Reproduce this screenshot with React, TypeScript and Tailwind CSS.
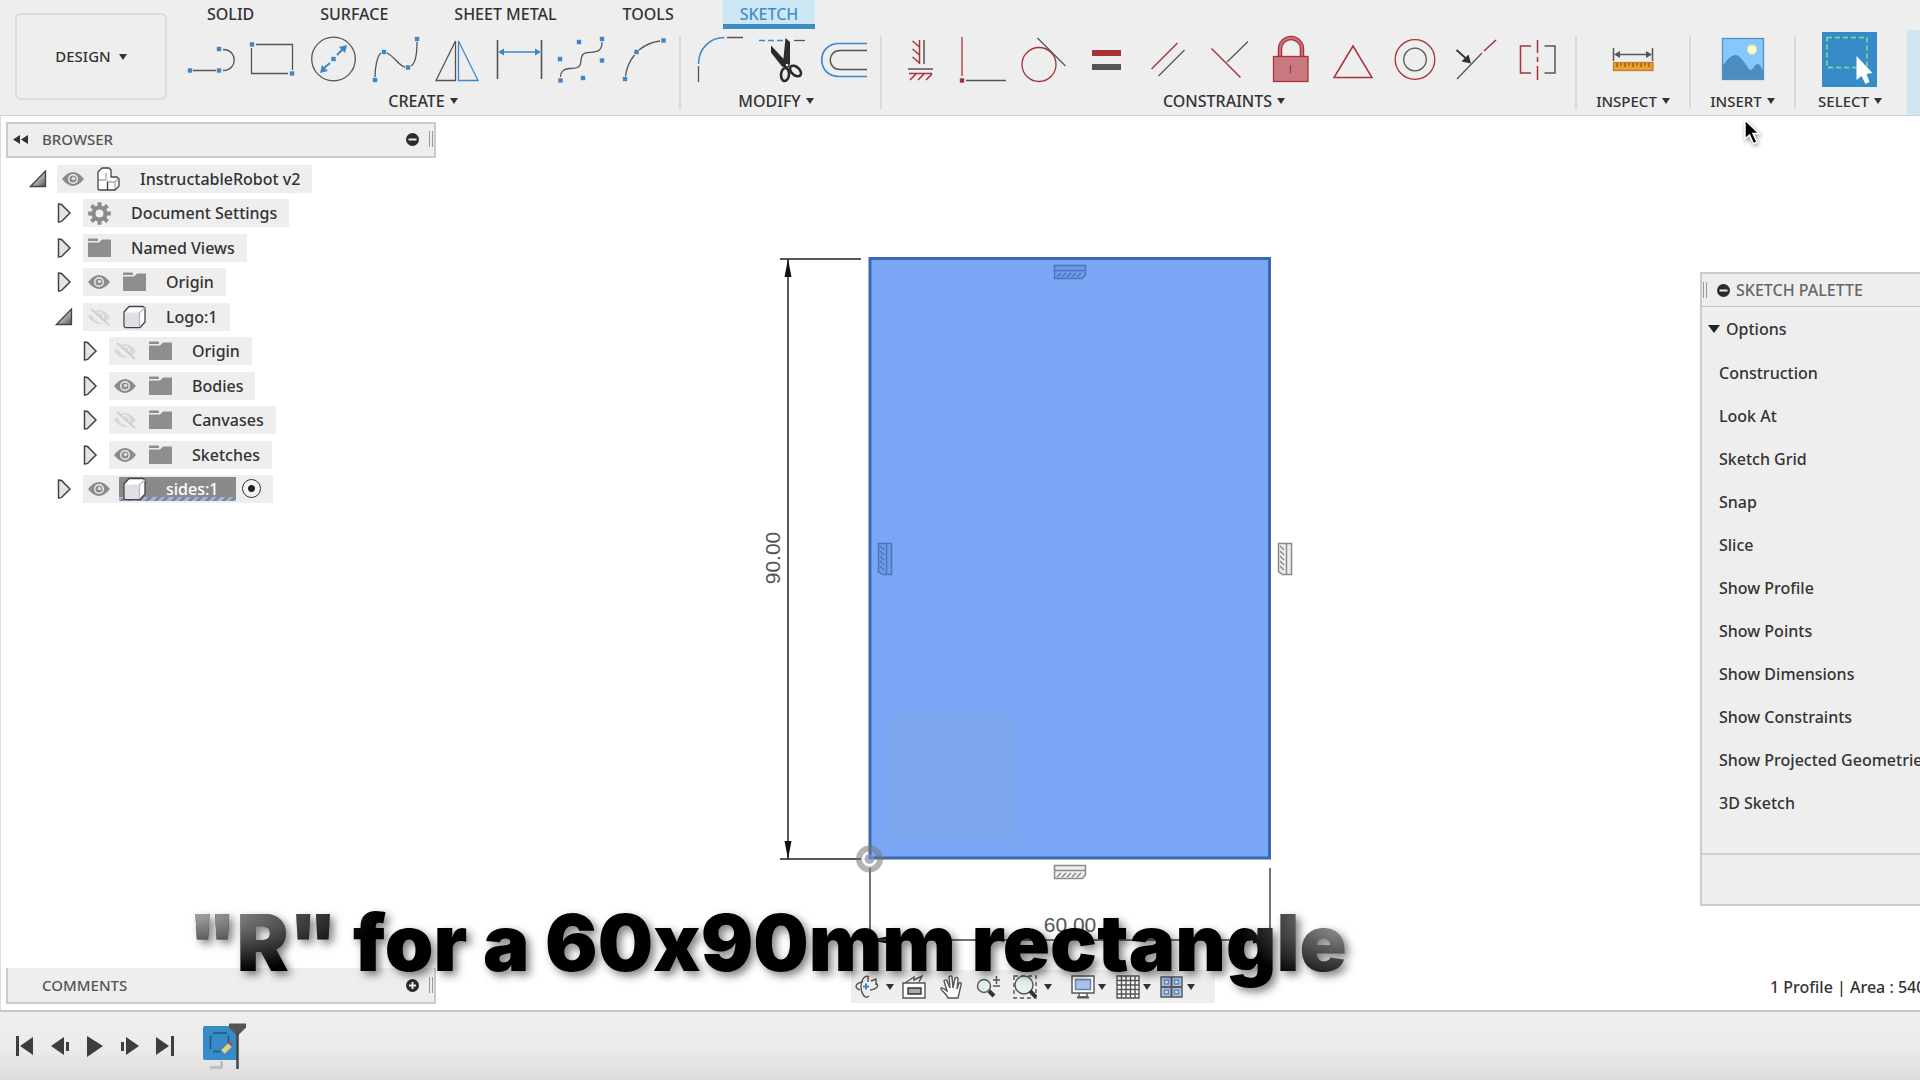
import type { ReactNode } from "react";

const BLUE = "#3f86c8";
const RED = "#a8323a";
const INK = "#555";

const Caret = () => (
    <svg className="h-2 w-2 shrink-0" viewBox="0 0 8 8" fill="#333">
        <path d="M0 1h8L4 7z" />
    </svg>
);

const Dot = ({ x, y, color = BLUE }: { x: number; y: number; color?: string }) => (
    <rect x={x - 2.2} y={y - 2.2} width="4.4" height="4.4" fill={color} stroke="none" />
);

// toolbar icons share one coordinate space, every tool shows its own slice of it
const Tool = ({ x, label, w = 62, children }: { x: number; label: string; w?: number; children: ReactNode }) => (
    <button type="button" aria-label={label} className="shrink-0">
        <svg className="block h-[57px]" width={w} viewBox={`${x} 31 ${w} 57`} fill="none" stroke={INK} strokeWidth="1.3">
            {children}
        </svg>
    </button>
);

const Group = ({ label, shift, className = "", children }: { label: string; shift?: boolean; className?: string; children: ReactNode }) => (
    <div className={`flex shrink-0 flex-col items-center ${className}`}>
        <div className="mt-[2px] flex">{children}</div>
        <button type="button" className={`flex items-center gap-[5px] leading-[26px] ${shift ? "mr-3" : "text-[15px]"}`}>
            {label} <Caret />
        </button>
    </div>
);

const Divider = () => <div className="mt-[7px] h-[73px] w-[2px] shrink-0 bg-[#d9d9d9]" />;

const CreateTools = () => (
    <>
        <Tool x={181} label="Line">
            <path d="M193 70.500h23M223 70.500c15 0 15-21 0-21" />
            <Dot x={190} y={70.500} /><Dot x={219} y={70.500} /><Dot x={219} y={49} />
        </Tool>
        <Tool x={243} label="Rectangle">
            <path d="M256 44.500h36.500V70M288 73.500h-36.500V48" />
            <Dot x={252} y={44.500} /><Dot x={292} y={73.500} />
        </Tool>
        <Tool x={305} label="Circle">
            <circle cx="333.5" cy="59" r="21.800" />
            <path d="M337 55l6-6M330 63l-6 5" stroke={BLUE} strokeWidth="2" />
            <path d="M347 45l-2 8-6-6zM320 73l2-8 6 6z" fill={BLUE} stroke="none" />
            <Dot x={333.500} y={59} />
        </Tool>
        <Tool x={367} label="Spline">
            <path d="M375 77c0-9 2-21 6-24M387 53c8 4 12 13 18 14M411 66c5-3 6-14 6-24" />
            <Dot x={375} y={80} /><Dot x={384} y={52} /><Dot x={408} y={67.500} /><Dot x={417} y={39} />
        </Tool>
        <Tool x={429} label="Mirror">
            <path d="M455.500 41v39.500H436z" />
            <path d="M458.500 41v39.500H478z" stroke={BLUE} />
        </Tool>
        <Tool x={491} label="Sketch Dimension">
            <path d="M497.500 40v39M541.500 40v39" strokeWidth="1.600" />
            <path d="M501 52h37" stroke={BLUE} />
            <path d="M498 52l6-3.500v7zM541 52l-6-3.500v7z" fill={BLUE} stroke="none" />
        </Tool>
        <Tool x={553} label="Control Point Spline">
            <path d="M560.500 77c0-6 3-8 9-8.500 9-.5 11-1 11.500-8 .5-6 2-8 9-8.200 8-.3 12-2 12-10" />
            <Dot x={560} y={59} /><Dot x={560.500} y={80.500} /><Dot x={579} y={42} /><Dot x={583} y={78} /><Dot x={602} y={39} /><Dot x={602} y={60.500} />
        </Tool>
        <Tool x={615} label="Arc">
            <path d="M625.500 76c1-8 4-15 9-21M639 50c6-5 13-8 21-9" />
            <Dot x={625} y={79} /><Dot x={636.500} y={52} /><Dot x={663.500} y={40.500} />
        </Tool>
    </>
);

const ModifyTools = () => (
    <>
        <Tool x={689} label="Fillet">
            <path d="M698.500 66v16M727 37.500h16" />
            <path d="M698.500 64c0-15 11-26.500 26-26.500" stroke={BLUE} strokeWidth="1.500" />
        </Tool>
        <Tool x={751} label="Trim">
            <path d="M759 40.500h24" stroke={BLUE} strokeDasharray="6 3" />
            <path d="M794 40.500h11" />
            <path d="M785.500 38l4.500 4v22l-3 2-4-3zM771 45.500l15 16-1 6-3-1-11-14z" fill="#2b2b2b" stroke="none" />
            <ellipse cx="785" cy="74.500" rx="4" ry="6.500" stroke="#2b2b2b" strokeWidth="2.600" transform="rotate(5 785 74.500)" />
            <ellipse cx="795.500" cy="71" rx="4" ry="6.500" stroke="#2b2b2b" strokeWidth="2.600" transform="rotate(-48 795.500 71)" />
            <circle cx="787" cy="65" r="2" fill="#eee" stroke="#2b2b2b" />
        </Tool>
        <Tool x={813} label="Offset">
            <path d="M867 43.500h-28c-23 0-23 33 0 33h28" stroke={BLUE} strokeWidth="1.700" />
            <path d="M867 50.500h-27c-13 0-13 19 0 19h27" strokeWidth="1.500" />
        </Tool>
    </>
);

const ConstraintTools = () => (
    <>
        <Tool x={889} label="Horizontal/Vertical">
            <path d="M924 40v24M908 69h25" strokeWidth="1.500" />
            <path d="M919.500 40v24M909 73.500h23M912.500 41l7 6M912.500 49l7 6M912.500 57l7 6M910 80l6-6M918 80l6-6M926 80l6-6" stroke={RED} strokeWidth="1.500" />
        </Tool>
        <Tool x={951} label="Coincident">
            <path d="M962 37v39" stroke={RED} />
            <path d="M966 80.500h40" />
            <Dot x={962} y={80.500} color={RED} />
        </Tool>
        <Tool x={1013} label="Tangent">
            <circle cx="1039" cy="64.500" r="17" stroke={RED} />
            <path d="M1037.500 38l28 28" />
        </Tool>
        <Tool x={1075} label="Equal">
            <path d="M1092 64h29v6h-29z" fill={INK} stroke="none" />
            <path d="M1092 50h29v6h-29z" fill={RED} stroke="none" />
        </Tool>
        <Tool x={1137} label="Parallel">
            <path d="M1151.500 69l26-26" stroke={RED} strokeWidth="1.500" />
            <path d="M1158.500 76l26-26" />
        </Tool>
        <Tool x={1199} label="Perpendicular">
            <path d="M1227 62l21-20.500" />
            <path d="M1211.500 48.500l29 29" stroke={RED} strokeWidth="1.500" />
        </Tool>
        <Tool x={1261} label="Fix/UnFix">
            <path d="M1280 56V49a10.500 10.500 0 0 1 22 0v7" stroke={RED} strokeWidth="4.500" />
            <path d="M1280 56V49a10.500 10.500 0 0 1 22 0v7" stroke="#c8797f" strokeWidth="1.800" />
            <rect x="1273.500" y="56.500" width="34.500" height="25" fill="#c8797f" stroke={RED} />
            <path d="M1290.500 65v8" stroke={RED} />
        </Tool>
        <Tool x={1323} label="Polygon">
            <path d="M1353 46l-19 31.500h38z" stroke={RED} strokeWidth="1.500" />
        </Tool>
        <Tool x={1385} label="Concentric">
            <circle cx="1415" cy="59.500" r="19.800" stroke={RED} />
            <circle cx="1415" cy="59.500" r="11.300" />
        </Tool>
        <Tool x={1447} label="Midpoint">
            <path d="M1457 79l25-26" />
            <path d="M1484 51l12-11" stroke={RED} strokeWidth="1.600" />
            <path d="M1456.500 50l9 8" stroke="#333" strokeWidth="1.800" />
            <path d="M1471 63.500l-9.500-2 7-7z" fill="#333" stroke="none" />
        </Tool>
        <Tool x={1509} label="Symmetry">
            <path d="M1531 46h-10.500v27H1531M1537.500 40v13M1537.500 57v5M1537.500 66v14" stroke={RED} strokeWidth="1.500" />
            <path d="M1544.500 46h10.500v27h-10.500" strokeWidth="1.500" />
        </Tool>
    </>
);

const tabs = ["SOLID", "SURFACE", "SHEET METAL", "TOOLS", "SKETCH"];

const Toolbar = () => (
    <header className="flex h-[116px] shrink-0 overflow-hidden border-b border-[#d4d4d4] bg-[#eeeeee] font-medium">
        <div className="w-[181px] shrink-0 pt-[13px] pl-[15px]">
            <button type="button" className="flex h-[87px] w-[152px] items-center justify-center gap-2 rounded-md border-2 border-[#dcdcdc] text-[15px]">
                DESIGN <Caret />
            </button>
        </div>
        <div className="flex flex-1 flex-col">
            <nav className="flex h-[29px] shrink-0 gap-8 pl-[9px]">
                {tabs.map((tab) => (
                    <button key={tab} type="button" className={tab === "SKETCH" ? "border-b-[5px] border-[#3b8dc2] bg-[#cde7f5] px-[17px] pt-[3px] leading-5 text-[#4390c8]" : "border-b-[5px] border-transparent px-[17px] pt-[3px] leading-5"}>
                        {tab}
                    </button>
                ))}
            </nav>
            <div className="flex flex-1">
                <Group label="CREATE" shift className="mr-[2px]"><CreateTools /></Group>
                <Divider />
                <Group label="MODIFY" shift className="ml-2 pr-[5px]"><ModifyTools /></Group>
                <Divider />
                <Group label="CONSTRAINTS" shift className="ml-[7px] pr-1"><ConstraintTools /></Group>
                <Divider />
                <Group label="INSPECT" className="w-[112px]">
                    <Tool x={1602} label="Measure">
                        <path d="M1613.500 48v13M1652.500 48v13M1616 54.500h34" strokeWidth="1.500" />
                        <path d="M1614 54.500l6-3.500v7zM1652 54.500l-6-3.500v7z" fill={INK} stroke="none" />
                        <rect x="1613.500" y="62.500" width="39.500" height="8" fill="#eca02c" stroke="#b98335" />
                        <path d="M1617 63v4M1621 63v3M1625 63v4M1629 63v3M1633 63v4M1637 63v3M1641 63v4M1645 63v3M1649 63v4" stroke="#6b4a17" strokeWidth="1" />
                    </Tool>
                </Group>
                <Divider />
                <Group label="INSERT" className="w-[103px]">
                    <Tool x={1712} label="Insert Image">
                        <rect x="1722.500" y="38.500" width="41" height="41" fill="#86c8fb" stroke="none" />
                        <path d="M1722.500 66c5-7 9-11 13-11s8 6 12 12c1 2 2 3 3 3 3 0 4-6 7-6s4 4 6 7v8h-41z" fill="#4b8dc0" stroke="none" />
                        <circle cx="1752" cy="49.500" r="4.500" fill="#fdfbd3" stroke="#e8e6a0" />
                        <rect x="1722.500" y="38.500" width="41" height="41" stroke="#5790bd" />
                    </Tool>
                </Group>
                <Divider />
                <Group label="SELECT" className="mr-[3px] w-[108px]">
                    <Tool x={1819} label="Select">
                        <rect x="1822" y="32" width="55" height="55" fill="#378bc6" stroke="none" />
                        <rect x="1827" y="37.500" width="40" height="30" stroke="#7fe39a" strokeWidth="1.500" strokeDasharray="5 3" />
                        <path d="M1856.500 56v24l5-4 4 8 4-2-3-8 6-1z" fill="#fff" stroke="none" />
                    </Tool>
                </Group>
                <div className="mt-px flex-1 bg-[#d0e6f3]" />
            </div>
        </div>
    </header>
);

const Eye = ({ off }: { off?: boolean }) => (
    <svg className="h-[18px] w-[22px]" viewBox="0 0 22 18">
        <path d="M0 9Q11-5 22 9 11 23 0 9z" fill={off ? "#d8d8d8" : "#8b8b8b"} />
        <circle cx="11" cy="9" r="5" fill="#eee" />
        <circle cx="11" cy="9" r="3.600" fill={off ? "#d8d8d8" : "#8b8b8b"} />
        {off ? (
            <>
                <path d="M1 3l19 15" stroke="#eee" strokeWidth="4" />
                <path d="M3 1l18 16" stroke="#cfcfcf" strokeWidth="2" />
            </>
        ) : <circle cx="11.500" cy="8.500" r="1.800" fill="#ddd" />}
    </svg>
);

const Folder = () => (
    <svg className="h-[20px] w-[23px]" viewBox="0 0 23 20" fill="#8e8e8e">
        <path d="M0 1.500Q0 .5 1 .5h8q1 0 1 1V3H0zM0 4.500h11L14 1.500h9V19H0z" />
    </svg>
);

const Gear = () => (
    <svg className="h-[23px] w-[23px]" viewBox="-11.500 -11.500 23 23" fill="none" stroke="#8a8a8a">
        <circle r="6" strokeWidth="4" />
        {[0, 45, 90, 135].map((a) => (
            <path key={a} d="M0-11.300v4.500M0 11.300v-4.500" strokeWidth="4" transform={`rotate(${a})`} />
        ))}
    </svg>
);

const Component = () => (
    <svg className="h-[24px] w-[23px]" viewBox="0 0 23 24" fill="#fff" stroke="#444" strokeWidth="1.300" strokeLinejoin="round">
        <path d="M1 5l4-4h7l2 2v7h6l2 2v7l-4 4H2l-1-1z" />
        <path d="M2 13h7M9 6v7M10 15h8l3-3M10.500 13v10M18 15v7" stroke="#aaa" fill="none" />
        <path d="M10.500 15v8" stroke="#444" />
    </svg>
);

const Cube = () => (
    <svg className="h-[24px] w-[23px]" viewBox="0 0 23 24" fill="#fff" stroke="#444" strokeWidth="1.300" strokeLinejoin="round">
        <path d="M1 7l5-5.500h14l2 1.500v14l-5 5.500H2L1 21z" />
        <path d="M2 7.500h14.500V22H2z" fill="#dfe1e8" stroke="none" />
        <path d="M16.500 22V7.500L22 3" stroke="#bbb" fill="none" />
    </svg>
);

const Arrow = ({ open }: { open?: boolean }) => open ? (
    <svg className="-ml-[2px] h-[18px] w-[18px]" viewBox="0 0 18 18">
        <defs>
            <linearGradient id="arrow" x1="0" y1="0" x2="1" y2="1">
                <stop offset=".4" stopColor="#ccc" />
                <stop offset="1" stopColor="#555" />
            </linearGradient>
        </defs>
        <path d="M16.500 1v15.500H1.500z" fill="url(#arrow)" stroke="#444" strokeWidth="1.300" />
    </svg>
) : (
    <svg className="h-[20px] w-[15px]" viewBox="0 0 15 20">
        <path d="M1.500 1Q5 1 6 3l7 7-7 7q-1 2-4.500 2z" fill="#e4e4e8" stroke="#444" strokeWidth="1.500" />
    </svg>
);

type Row = { name: string; level: 0 | 1 | 2; icon: ReactNode; eye?: "on" | "off"; open?: boolean; active?: boolean };

const rows: Row[] = [
    { name: "InstructableRobot v2", level: 0, icon: <Component />, eye: "on", open: true },
    { name: "Document Settings", level: 1, icon: <Gear /> },
    { name: "Named Views", level: 1, icon: <Folder /> },
    { name: "Origin", level: 1, icon: <Folder />, eye: "on" },
    { name: "Logo:1", level: 1, icon: <Cube />, eye: "off", open: true },
    { name: "Origin", level: 2, icon: <Folder />, eye: "off" },
    { name: "Bodies", level: 2, icon: <Folder />, eye: "on" },
    { name: "Canvases", level: 2, icon: <Folder />, eye: "off" },
    { name: "Sketches", level: 2, icon: <Folder />, eye: "on" },
    { name: "sides:1", level: 1, icon: <Cube />, eye: "on", active: true },
];

const indent = ["pl-[25px]", "pl-[51px]", "pl-[77px]"];

const TreeRow = ({ row }: { row: Row }) => (
    <li className={`flex h-7 items-center ${indent[row.level]}`}>
        <button type="button" aria-label={`Toggle ${row.name}`} className="w-[26px] shrink-0"><Arrow open={row.open} /></button>
        <div className="flex h-7 items-center bg-[#eeeeee] pr-3 pl-[5px]">
            {row.eye && <button type="button" aria-label={`Visibility of ${row.name}`} className="mr-[9px]"><Eye off={row.eye === "off"} /></button>}
            {row.active ? (
                <>
                    <button type="button" className="relative flex h-6 items-center gap-5 bg-[#8a8a8a] pr-[18px] pl-1 text-white">
                        <span className="absolute inset-x-0 bottom-0 h-1 bg-[repeating-linear-gradient(135deg,#9db6d8_0_3px,#7f8894_3px_6px)]" />
                        <span className="relative">{row.icon}</span>
                        {row.name}
                    </button>
                    <input type="radio" name="active-component" defaultChecked aria-label="Active component" className="ml-[6px] h-[19px] w-[19px] appearance-none rounded-full border border-[#333] bg-[radial-gradient(circle,#222_0_3px,#f4f4f4_4px)]" />
                </>
            ) : (
                <button type="button" className={`flex items-center gap-5 ${row.eye ? "pl-1" : ""}`}>
                    {row.icon}
                    {row.name}
                </button>
            )}
        </div>
    </li>
);

const RoundSign = ({ plus }: { plus?: boolean }) => (
    <svg className="h-[13px] w-[13px]" viewBox="0 0 13 13">
        <circle cx="6.500" cy="6.500" r="6.500" fill="#2b2b2b" />
        <path d={plus ? "M3 6.500h7M6.500 3v7" : "M2.500 6.500h8"} stroke="#eee" strokeWidth="2" />
    </svg>
);

const Grip = () => <div className="h-4 w-1 border-x border-[#999]" />;

const LeftPanels = () => (
    <aside className="ml-[5px] flex w-[430px] shrink-0 flex-col justify-between pt-[6px] pb-[6px]">
        <div>
            <div className="flex h-9 items-center border-2 border-[#cbcbcb] bg-[#eeeeee] pb-[2px] text-[#555]">
                <button type="button" aria-label="Collapse browser" className="ml-[5px]">
                    <svg className="h-[9px] w-[15px]" viewBox="0 0 15 9" fill="#333"><path d="M7 0v9L0 4.500zM15 0v9L8 4.500z" /></svg>
                </button>
                <h2 className="ml-[14px] flex-1 text-[15px]">BROWSER</h2>
                <button type="button" aria-label="Minimize browser"><RoundSign /></button>
                <div className="mr-px ml-[10px]"><Grip /></div>
            </div>
            <ul className="mt-[7px] flex h-[338px] flex-col justify-between">
                {rows.map((row, i) => <TreeRow key={i} row={row} />)}
            </ul>
        </div>
        <div className="flex h-9 items-center border-2 border-t-0 border-[#cbcbcb] bg-[#eeeeee] text-[#555]">
            <h2 className="ml-[34px] flex-1 text-[15px]">COMMENTS</h2>
            <button type="button" aria-label="Expand comments"><RoundSign plus /></button>
            <div className="mr-px ml-[10px]"><Grip /></div>
        </div>
    </aside>
);

const Glyph = ({ transform, color, fill }: { transform: string; color: string; fill: string }) => (
    <g transform={transform} stroke={color} fill="none" strokeWidth="1.500">
        <path d="M.5 .5h31v9l-3 4H.5z" fill={fill} />
        <path d="M1 5.500h30M3 12l4-4M8 12l4-4M13 12l4-4M18 12l4-4M23 12l4-4" />
    </g>
);

const Drawing = () => (
    <svg className="h-[710px] w-[540px] shrink-0" viewBox="760 250 540 710">
        <rect x="870" y="259" width="400" height="599" fill="#79a7f6" />
        <rect x="887" y="716" width="126" height="125" fill="#7ca6ec" />
        <path d="M870 258.500h399.500v599.500H870z" fill="none" stroke="#3b68b0" strokeWidth="3" />
        <path d="M780 259h81M780 859h81M788 259v600" stroke="#222" strokeWidth="1.500" />
        <path d="M788 259l3.500 18h-7zM788 859l3.500-18h-7zM870 940l17-3.500v7zM1270 940l-17-3.500v7z" fill="#111" />
        <path d="M870 868v73M1270 868v73M870 940h400" stroke="#444" strokeWidth="1.500" />
        <circle cx="869.500" cy="859" r="10.500" fill="none" stroke="#777" strokeOpacity=".55" strokeWidth="6" />
        <circle cx="869.500" cy="859" r="5" fill="#8c8cb4" fillOpacity=".7" />
        <Glyph transform="translate(1054 265)" color="#4776bd" fill="#6f9ce8" />
        <Glyph transform="translate(1054 865)" color="#8a8a8a" fill="#eee" />
        <Glyph transform="translate(892 543) rotate(90)" color="#4776bd" fill="#6f9ce8" />
        <Glyph transform="translate(1292 543) rotate(90)" color="#8a8a8a" fill="#eee" />
        <g fontFamily="Liberation Sans, sans-serif" fontSize="21" fill="#555" textAnchor="middle">
            <text transform="translate(780 558) rotate(-90)">90.00</text>
            <text x="1070" y="932">60.00</text>
        </g>
    </svg>
);

const NavTool = ({ label, menu, className = "", children }: { label: string; menu?: boolean; className?: string; children: ReactNode }) => (
    <button type="button" aria-label={label} className={`flex items-center gap-[3px] ${className}`}>
        <svg className="h-6 w-6" viewBox="0 0 24 24" fill="none" stroke="#555" strokeWidth="1.400">{children}</svg>
        {menu && <Caret />}
    </button>
);

const NavBar = () => (
    <div className="ml-[6px] flex h-[33px] w-[364px] shrink-0 items-center bg-[#eeeeee] pl-1">
        <NavTool label="Orbit" menu className="mr-2 gap-[7px]">
            <path d="M14 2C9-1 6 6 6 12s4 13 8 9M15 15c8-1 9-5 6-7M8 7C0 8-1 13 5 15M13 1v6M16 6l5-2v6" />
            <path d="M8 11.500h6M11 8.500v6" stroke={BLUE} strokeWidth="2" />
        </NavTool>
        <NavTool label="Look At" className="mr-[13px]">
            <path d="M1 8h22v15H1z" fill="#fff" /><path d="M6 13h13v6H6z" fill="#aaa" stroke="#333" /><path d="M3 8l9-6v3l8-4-3 6" />
        </NavTool>
        <NavTool label="Pan" className="mr-[13px]">
            <path d="M9 23c-1-4-8-8-7-10 2-1 4 2 6 3L5 6c1-2 3-1 3 0l3 7-1-11c1-2 3-1 3 0l1 11 2-10c1-1 3-1 3 1l-1 10 2-6c1-1 3 0 2 2l-3 13z" fill="#fff" />
        </NavTool>
        <NavTool label="Zoom" className="mr-[13px]">
            <circle cx="8" cy="11" r="6.500" fill="#e3f1ed" /><path d="M13 16l5 5" stroke="#333" strokeWidth="4" /><path d="M17 5h7M20.500 1v8M17 11h7" />
        </NavTool>
        <NavTool label="Fit" menu className="mr-[19px] gap-[7px]">
            <path d="M1 1h22v22H1z" strokeDasharray="4 3" /><circle cx="11" cy="10" r="9" fill="#e3f1ed" /><path d="M17 16l6 6" stroke="#333" strokeWidth="4" />
        </NavTool>
        <NavTool label="Display Settings" menu className="mr-[10px]">
            <path d="M1 1h22v17H1zM8 18v4h8v-4" fill="#fff" /><path d="M4.500 4.500h15v10h-15z" fill="#a9c4ec" stroke="#6684b0" /><path d="M6 22.500h12" strokeWidth="2" />
        </NavTool>
        <NavTool label="Grid and Snaps" menu className="mr-[9px]">
            <path d="M1 1h22v22H1z" fill="#fff" /><path d="M5.500 1v22M10 1v22M14.500 1v22M19 1v22M1 5.500h22M1 10h22M1 14.500h22M1 19h22" />
        </NavTool>
        <NavTool label="Viewports" menu>
            <path d="M1 2h21v20H1z" fill="#a9c4ec" /><path d="M11.500 2v20M1 12h21" strokeWidth="2" /><path d="M4.500 5h4v4h-4zM14.500 5h4v4h-4zM4.500 15h4v4h-4zM14.500 15h4v4h-4z" stroke="#6684b0" fill="#d2e0f4" />
        </NavTool>
    </div>
);

const options = ["Construction", "Look At", "Sketch Grid", "Snap", "Slice", "Show Profile", "Show Points", "Show Dimensions", "Show Constraints", "Show Projected Geometries", "3D Sketch"];

const RightPanels = () => (
    <aside className="flex w-[220px] shrink-0 flex-col justify-between overflow-hidden pt-[156px] pb-[9px] whitespace-nowrap">
        <div className="border-y-2 border-l-2 border-[#cbcbcb] bg-[#eeeeee]">
            <div className="flex h-[33px] items-center border-b border-[#c4c4c4] pl-[1px] text-[#666]">
                <Grip />
                <button type="button" aria-label="Minimize palette" className="mr-[6px] ml-[10px]"><RoundSign /></button>
                <h2>SKETCH PALETTE</h2>
            </div>
            <button type="button" className="flex h-11 items-center gap-[6px] pl-[6px]">
                <svg className="h-2 w-3" viewBox="0 0 12 8" fill="#222"><path d="M0 0h12L6 8z" /></svg>
                Options
            </button>
            <ul className="pl-[17px]">
                {options.map((o) => <li key={o} className="flex h-[43px] items-center">{o}</li>)}
            </ul>
            <div className="mt-[29px] h-[51px] border-t-2 border-[#d0d0d0]" />
        </div>
        <p className="pl-[70px] leading-7">1 Profile | Area : 5400.00 mm^2</p>
    </aside>
);

const playback = [
    { label: "Go to start", d: "M0 0h3v20H0zM17 1v18L4 10z" },
    { label: "Step back", d: "M13 1v18L0 10zM15 6h3v9h-3z" },
    { label: "Play", d: "M1 0l16 10L1 21z" },
    { label: "Step forward", d: "M0 6h3v9H0zM5 1l13 9L5 19z" },
    { label: "Go to end", d: "M0 1l13 9L0 19zM15 0h3v20h-3z" },
];

const Timeline = () => (
    <footer className="flex h-[70px] shrink-0 items-center border-t-2 border-[#c6c6c6] bg-linear-to-b from-[#efefef] via-[#ebebeb] to-[#dddddd] pl-4">
        <div className="flex gap-[17px]">
            {playback.map((p) => (
                <button key={p.label} type="button" aria-label={p.label}>
                    <svg className="h-[21px] w-[18px]" viewBox="0 0 18 21" fill="#3d3d3d"><path d={p.d} /></svg>
                </button>
            ))}
        </div>
        <button type="button" aria-label="Sketch feature" className="ml-[29px]">
            <svg className="h-[46px] w-[44px]" viewBox="204 1024 44 46" fill="none">
                <path d="M222.500 1062v6.500H211" stroke="#bbb" strokeWidth="2.500" />
                <rect x="204" y="1027" width="35" height="34" rx="2" fill="#378bc6" />
                <path d="M214 1034h14M211.500 1037v13M229.500 1037v9M214 1052.500h8" stroke="#2b5576" strokeWidth="1.600" />
                <path d="M224 1053l7-7" stroke="#e3cf7d" strokeWidth="5" />
                <path d="M229 1044l3-2 2 3-2 2z" fill="#b14a55" />
                <path d="M230 1024.500h17v4l-8 8h-1l-8-8z" fill="#555" />
                <path d="M238.500 1034v36" stroke="#444" strokeWidth="2.500" />
            </svg>
        </button>
    </footer>
);

const App = () => {
    return (
        <div className="relative flex h-screen w-full flex-col overflow-hidden bg-white font-['Noto_Sans',sans-serif] text-base font-medium text-[#333]">
            <Toolbar />
            <main className="relative flex min-h-0 flex-1 border-l border-[#dddddd]">
                <LeftPanels />
                <section className="flex flex-1 flex-col items-center justify-end gap-[10px] pr-[76px] pb-[7px]">
                    <Drawing />
                    <NavBar />
                </section>
                <RightPanels />
                <p className="absolute bottom-[17px] left-[187px] bg-black bg-[radial-gradient(ellipse_190px_60px_at_0%_20%,#aaa,transparent),radial-gradient(ellipse_110px_70px_at_100%_25%,#aaa,transparent)] bg-clip-text font-['Inter',sans-serif] text-[78px] leading-[100px] font-black whitespace-nowrap text-transparent drop-shadow-[4px_4px_4px_rgba(0,0,0,0.5)] [font-feature-settings:'calt'_0]">
                    "R" for a 60x90mm rectangle
                </p>
                <svg className="absolute top-[2px] left-[1742px] h-7 w-5 drop-shadow-[1px_2px_2px_rgba(0,0,0,0.4)]" viewBox="0 0 20 28">
                    <path d="M2 2v19l4.500-4 4 9 3.500-2-4-8.500h6z" fill="#000" stroke="#fff" strokeWidth="1.500" />
                </svg>
            </main>
            <Timeline />
        </div>
    )
}

export default App;
